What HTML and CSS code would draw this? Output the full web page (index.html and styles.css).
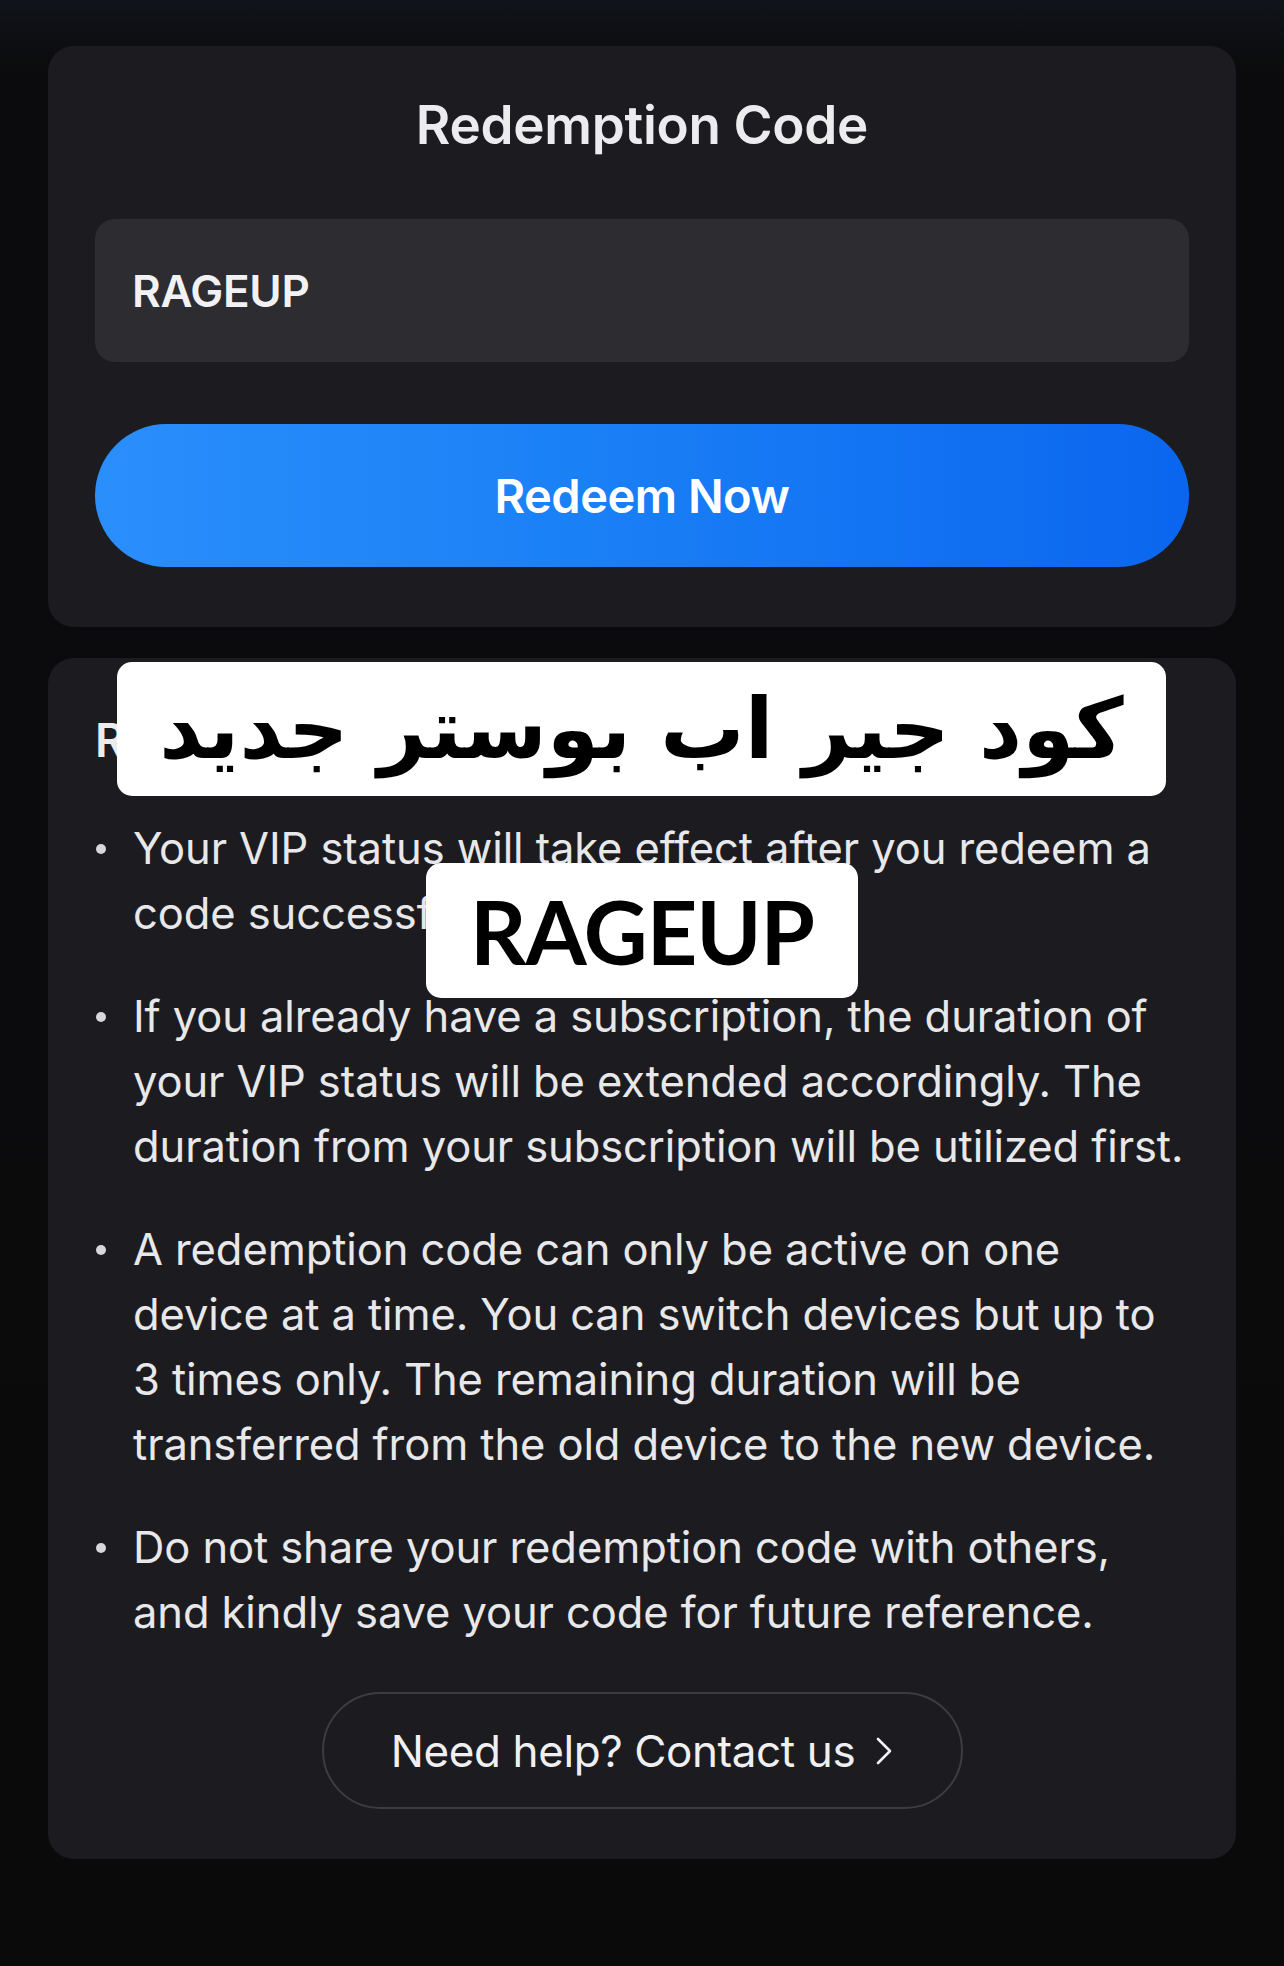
FILE: index.html
```html
<!DOCTYPE html>
<html lang="en">
<head>
    <meta charset="UTF-8">
    <meta name="viewport" content="width=device-width, initial-scale=1.0">
    <title>Redemption Code</title>
    <link rel="stylesheet" href="styles.css">
</head>

<body>
    <div class="page">
        <div class="card redeem-card">
            <h1 class="card-title">Redemption Code</h1>
            <div class="code-field">RAGEUP</div>
            <button class="redeem-button">Redeem Now</button>
        </div>

        <div class="card rules-card">
            <h2 class="rules-title">Redemption Rules</h2>
            <ul class="rules-list">
                <li>Your VIP status will take effect after you redeem a code successfully.</li>
                <li>If you already have a subscription, the duration of your VIP status will be extended accordingly. The duration from your subscription will be utilized first.</li>
                <li>A redemption code can only be active on one device at a time. You can switch devices but up to 3 times only. The remaining duration will be transferred from the old device to the new device.</li>
                <li>Do not share your redemption code with others, and kindly save your code for future reference.</li>
            </ul>
            <div class="help-row">
                <button class="help-button">
                    Need help? Contact us
                    <svg class="chevron" width="18" height="30" viewBox="0 0 18 30">
                        <path d="M3 3 L15 15 L3 27" fill="none" stroke="#f2f2f4" stroke-width="2.6" stroke-linecap="round" stroke-linejoin="round"/>
                    </svg>
                </button>
            </div>

            <!-- sticker labels pasted over the rules -->
            <div class="sticker sticker-title" dir="rtl">كود جير اب بوستر جديد</div>
            <div class="sticker sticker-code">RAGEUP</div>
        </div>
    </div>
</body>
</html>
```

FILE: styles.css
```css
body {
    margin: 0;
    min-height: 100vh;
    font-family: Inter, 'Noto Sans', sans-serif;
    background: linear-gradient(180deg, #101319 0px, #0b0b0d 70px, #0a0a0b 100%);
    color: #ececee;
}

.page {
    padding: 46px 48px 0;
    display: flex;
    flex-direction: column;
    gap: 31px;
}

.card {
    background-color: #1c1c20;
    border-radius: 26px;
}

.redeem-card {
    padding: 51px 47px 60px;
    display: flex;
    flex-direction: column;
}

.card-title {
    margin: 0 0 66px;
    text-align: center;
    font-size: 53px;
    line-height: 56px;
    font-weight: 600;
    letter-spacing: -0.3px;
    color: #ececee;
}

.code-field {
    height: 143px;
    display: flex;
    align-items: center;
    padding: 0 37px;
    background-color: #2c2c31;
    border-radius: 20px;
    font-size: 44px;
    font-weight: 600;
    letter-spacing: -0.3px;
    color: #f2f2f4;
}

.redeem-button {
    margin-top: 62px;
    height: 143px;
    border: none;
    border-radius: 72px;
    background: linear-gradient(90deg, #2a8ffb 0%, #1a80f6 45%, #0b66ef 100%);
    color: #fff;
    font-family: inherit;
    font-size: 47px;
    font-weight: 600;
    letter-spacing: -0.5px;
    cursor: pointer;
}

.rules-card {
    position: relative;
    padding: 54px 47px 50px;
}

.rules-title {
    margin: 0;
    font-size: 46px;
    line-height: 56px;
    font-weight: 600;
    color: #ececee;
}

.rules-list {
    list-style: none;
    margin: 48px 0 0;
    padding: 0;
}

.rules-list li {
    position: relative;
    padding-left: 38px;
    font-size: 43.5px;
    line-height: 65px;
    letter-spacing: -0.1px;
    color: #e8e8ea;
}

.rules-list li + li {
    margin-top: 38px;
}

.rules-list li::before {
    content: "";
    position: absolute;
    left: 1px;
    top: 28px;
    width: 10px;
    height: 10px;
    border-radius: 50%;
    background-color: #d8d8da;
}

.help-row {
    margin-top: 47px;
    display: flex;
    justify-content: center;
}

.help-button {
    width: 641px;
    height: 117px;
    display: flex;
    align-items: center;
    justify-content: center;
    gap: 20px;
    background: transparent;
    border: 2px solid #3c3c41;
    border-radius: 59px;
    color: #f0f0f2;
    font-family: inherit;
    font-size: 44px;
    letter-spacing: -0.4px;
    cursor: pointer;
}

.sticker {
    position: absolute;
    background-color: #fff;
    color: #000;
    border-radius: 15px;
    display: flex;
    align-items: center;
    justify-content: center;
}

.sticker-title {
    left: 69px;
    top: 4px;
    width: 1049px;
    height: 134px;
    font-family: 'DejaVu Sans', sans-serif;
    font-size: 84px;
    font-weight: 700;
}

.sticker-code {
    left: 378px;
    top: 205px;
    width: 432px;
    height: 135px;
    font-family: Lato, sans-serif;
    font-size: 88px;
    font-weight: 700;
    letter-spacing: -1px;
}
```
